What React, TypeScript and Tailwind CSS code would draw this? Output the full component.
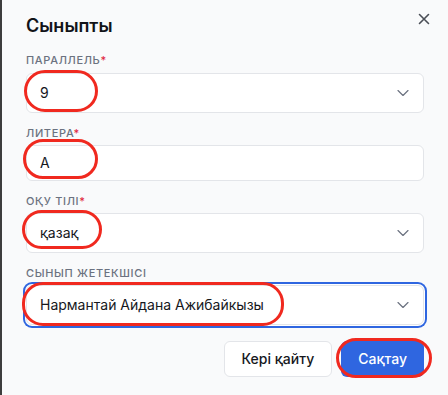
import { ChevronDown } from "lucide-react";

const Label = ({ text, required }: { text: string; required?: boolean }) => (
  <div className="text-[11px] font-medium uppercase leading-4 tracking-[0.06em] text-[#6b7280]">
    {text}
    {required && <span className="text-[#e0263c]">*</span>}
  </div>
);

const SelectBox = ({ value, focused }: { value: string; focused?: boolean }) => (
  <div
    className={
      focused
        ? "flex h-10 items-center justify-between rounded-md border border-[#e3e5e9] bg-white pl-[13px] pr-[10px] ring-2 ring-[#2f66e0] ring-offset-1"
        : "flex h-10 items-center justify-between rounded-md border border-[#e3e5e9] bg-white pl-[13px] pr-[10px]"
    }
  >
    <span className="text-sm text-[#16181d]">{value}</span>
    <ChevronDown className="size-5 text-[#6b7280]" strokeWidth={1.4} />
  </div>
);

// red marker circles drawn over the screenshot
const Mark = ({ cls }: { cls: string }) => (
  <div className={"pointer-events-none absolute rounded-[21px] border-[3px] border-[#f0291f] " + cls} />
);

export default function App() {
  return (
    <div
      className="relative h-[395px] w-[448px] overflow-hidden border-l-2 border-[#3d3d3d] bg-[#f9fafb] px-6 pt-3"
      style={{ fontFamily: "Inter, 'Noto Sans', sans-serif" }}
    >
      <button className="absolute right-[18px] top-[13px] text-[#4b4f57]">
        <svg width="12" height="12" viewBox="0 0 12 12" fill="none" stroke="currentColor" strokeWidth="1.6" strokeLinecap="round">
          <path d="M1.5 1.5l9 9M10.5 1.5l-9 9" />
        </svg>
      </button>

      <h2 className="mb-3 text-[18px] font-semibold leading-7 text-[#111318]">Сыныпты</h2>

      <div className="mb-[5px]">
        <Label text="Параллель" required />
      </div>
      <SelectBox value="9" />

      <div className="mb-1 mt-3">
        <Label text="Литера" required />
      </div>
      <div className="flex h-9 items-center rounded-md border border-[#e3e5e9] bg-white pl-[13px]">
        <span className="text-sm text-[#16181d]">А</span>
      </div>

      <div className="mb-1 mt-3">
        <Label text="Оқу тілі" required />
      </div>
      <SelectBox value="қазақ" />

      <div className="mb-1 mt-3">
        <Label text="Сынып жетекшісі" />
      </div>
      <SelectBox value="Нармантай Айдана Ажибайкызы" focused />

      <div className="mt-4 flex justify-end gap-[9px]">
        <button className="h-9 rounded-md border border-[#e3e5e9] bg-white px-[17px] text-sm font-medium text-[#16181d]">
          Кері қайту
        </button>
        <button className="h-9 rounded-md bg-[#2f66e0] px-[17px] text-sm font-medium text-white">
          Сақтау
        </button>
      </div>

      <Mark cls="left-[22px] top-[70px] h-[42px] w-[74px]" />
      <Mark cls="left-[21px] top-[139px] h-[40px] w-[75px]" />
      <Mark cls="left-[20px] top-[210px] h-[39px] w-[80px]" />
      <Mark cls="left-[20px] top-[282px] h-[44px] w-[262px]" />
      <Mark cls="left-[334px] top-[338px] h-[40px] w-[96px]" />
    </div>
  );
}
